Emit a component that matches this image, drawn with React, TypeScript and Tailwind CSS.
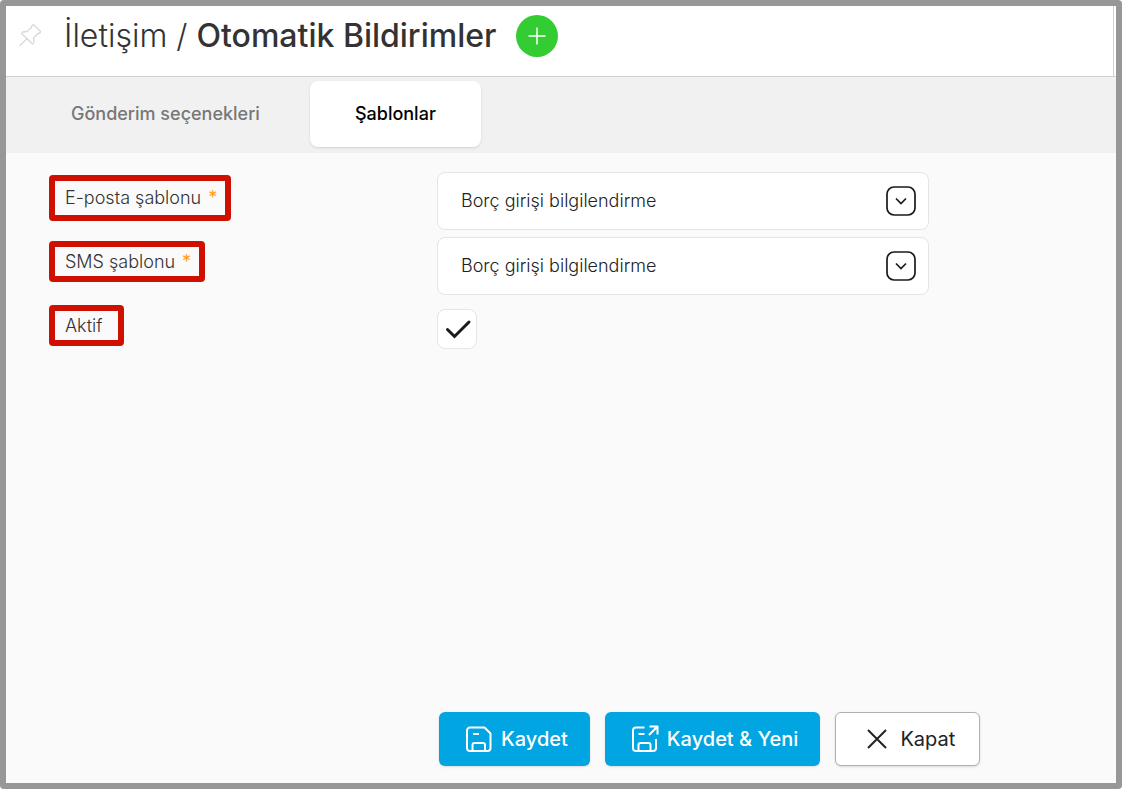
import { useState } from 'react';

const templates = ['Borç girişi bilgilendirme'];

function PinIcon() {
  return (
    <svg className="size-6" viewBox="0 0 24 24" fill="none" stroke="currentColor" strokeWidth="1.3" strokeLinejoin="round" strokeLinecap="round">
      <path d="M2 22.5 9 15.5M15.5 1.5 22.5 8.5 22 10 20 10.5 15.5 15 16 19.5 14.5 21 3.5 10.5 4.5 9 9 8.5 13.5 4.5 14 2.5Z" />
    </svg>
  );
}

function SaveIcon() {
  return (
    <svg className="size-7" viewBox="0 0 28 28" fill="none" stroke="currentColor" strokeWidth="2" strokeLinejoin="round">
      <path d="M5 2.5H19.5L25.5 8.5V23A3 3 0 0 1 22.5 26H5A3 3 0 0 1 2 23V5.5A3 3 0 0 1 5 2.5ZM8 9H14M7.5 26V20A2 2 0 0 1 9.5 18H18A2 2 0 0 1 20 20V26" />
    </svg>
  );
}

function SaveNewIcon() {
  return (
    <svg className="size-7" viewBox="0 0 28 28" fill="none" stroke="currentColor" strokeWidth="2" strokeLinejoin="round">
      <path d="M13.5 2.5H5A3 3 0 0 0 2 5.5V23A3 3 0 0 0 5 26H22A3 3 0 0 0 25 23V14M7.5 9H13.5M7.5 26V20A2 2 0 0 1 9.5 18H17.5A2 2 0 0 1 19.5 20V26M18 10 26 2M18.5 1.5H26.5V9.5" />
    </svg>
  );
}

function TemplateSelect({ id }: { id: string }) {
  return (
    <div className="relative">
      <select id={id} className="h-[58px] w-full appearance-none rounded-lg border border-[#e5e5e5] bg-white pl-[23px] pr-16 text-lg font-light text-[#222]">
        {templates.map((name) => (
          <option key={name}>{name}</option>
        ))}
      </select>
      <svg className="pointer-events-none absolute right-[13px] top-3.5 size-[30px]" viewBox="0 0 30 30" fill="none" stroke="#1a1a1a" strokeWidth="1.7">
        <rect x="1" y="1" width="28" height="28" rx="7" />
        <path d="M10 12.5 15 17.5 20 12.5" />
      </svg>
    </div>
  );
}

export default function App() {
  const [active, setActive] = useState(true);

  return (
    <div className="flex min-h-screen flex-col rounded border-6 border-[#979797] bg-[#fafafa] font-['Inter',sans-serif]">
      <header className="flex h-[71px] items-start border-b border-[#d0d0d0] bg-white pr-0.5">
        <div className="flex h-full flex-1 items-start border-r border-[#d0d0d0] pl-3">
          <button aria-label="Sabitle" className="mt-[17px] text-[#d8d8d8]">
            <PinIcon />
          </button>
          <h1 className="ml-[22px] mt-2.5 text-[32px] leading-10 font-light text-[#333]">
            İletişim / <span className="font-medium">Otomatik Bildirimler</span>
          </h1>
          <button aria-label="Ekle" className="ml-5 mt-[9px] flex size-[42px] items-center justify-center rounded-full bg-[#33cc33] text-white">
            <svg className="size-[18px]" viewBox="0 0 18 18" stroke="currentColor" strokeWidth="1.5">
              <path d="M9 0.5V17.5M0.5 9H17.5" />
            </svg>
          </button>
        </div>
      </header>

      <nav className="flex h-[76px] gap-[5px] bg-[#f1f1f1] pt-1 pl-5">
        <button className="h-[66px] px-[45px] text-lg font-medium text-[#777]">Gönderim seçenekleri</button>
        <button className="h-[66px] rounded-lg bg-white px-[45px] text-lg font-medium text-black shadow">Şablonlar</button>
      </nav>

      <main className="flex flex-1 flex-col">
        <form className="flex flex-1 flex-col pb-[17px]" onSubmit={(e) => e.preventDefault()}>
          <div className="grid grid-cols-[388px_minmax(0,492px)] gap-y-[7px] pt-[19px] pl-[43px] text-lg font-light text-[#333]">
            <div className="pt-[3px]">
              <label htmlFor="email" className="flex h-[46px] w-fit items-center rounded border-6 border-[#cf1000] pr-2 pl-2.5">
                E-posta şablonu<span className="ml-[7px] font-normal text-[#ff9d1e]">*</span>
              </label>
            </div>
            <TemplateSelect id="email" />

            <div className="pt-1">
              <label htmlFor="sms" className="flex h-[41px] w-fit items-center rounded border-6 border-[#cf1000] pr-2 pl-2.5">
                SMS şablonu<span className="ml-[7px] font-normal text-[#ff9d1e]">*</span>
              </label>
            </div>
            <TemplateSelect id="sms" />

            <div className="pt-[3px]">
              <label htmlFor="active" className="flex h-[41px] w-fit items-center rounded border-6 border-[#cf1000] pr-4 pl-2.5">
                Aktif
              </label>
            </div>
            <div className="relative pt-[7px]">
              <input
                id="active"
                type="checkbox"
                checked={active}
                onChange={(e) => setActive(e.target.checked)}
                className="peer block size-10 appearance-none rounded-lg border border-[#e5e5e5] bg-white"
              />
              <svg className="pointer-events-none absolute top-[7px] left-0 hidden size-10 peer-checked:block" viewBox="0 0 40 40" fill="none" stroke="#1a1a1a" strokeWidth="3" strokeLinecap="round">
                <path d="M10.5 20.5 17.5 27.5 32 13" />
              </svg>
            </div>
          </div>

          <div className="mt-auto flex gap-[15px] pl-[433px] text-xl">
            <button className="flex h-[54px] items-center gap-2 rounded-md bg-[#00a5e1] pr-[22px] pl-[26px] font-medium text-white shadow">
              <SaveIcon />
              Kaydet
            </button>
            <button className="flex h-[54px] items-center gap-2 rounded-md bg-[#00a5e1] pr-[22px] pl-[26px] font-medium text-white shadow">
              <SaveNewIcon />
              Kaydet &amp; Yeni
            </button>
            <button type="button" className="flex h-[54px] items-center gap-3 rounded-md border border-[#b0b0b0] bg-white pr-6 pl-[30px] text-[#222] shadow">
              <svg className="size-[22px]" viewBox="0 0 22 22" stroke="currentColor" strokeWidth="2">
                <path d="M2 2 20 20M20 2 2 20" />
              </svg>
              Kapat
            </button>
          </div>
        </form>
      </main>
    </div>
  );
}
